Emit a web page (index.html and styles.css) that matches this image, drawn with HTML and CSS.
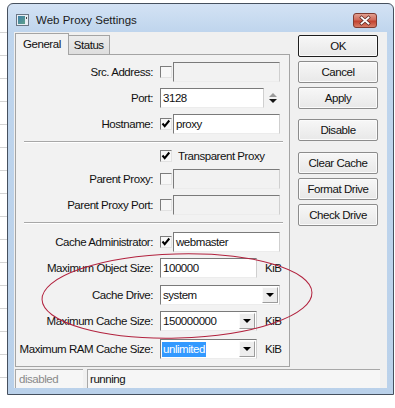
FILE: index.html
```html
<!DOCTYPE html>
<html lang="en">
<head>
    <meta charset="UTF-8">
    <title>Web Proxy Settings</title>
    <link rel="stylesheet" href="styles.css">
</head>
<body>
    <div class="window">
        <div class="titlebar">
            <svg class="app-icon" width="13" height="12" viewBox="0 0 13 12">
                <defs>
                    <linearGradient id="ig" x1="0" y1="0" x2="1" y2="1">
                        <stop offset="0" stop-color="#3d7fa8"/>
                        <stop offset="1" stop-color="#5fa08a"/>
                    </linearGradient>
                </defs>
                <rect x="0.5" y="0.5" width="12" height="11" fill="#e8eef4" stroke="#6b7786"/>
                <rect x="2" y="2" width="7" height="8" fill="url(#ig)"/>
                <rect x="10" y="3" width="1" height="2" fill="#444"/>
            </svg>
            <span class="title">Web Proxy Settings</span>
            <svg class="close-btn" width="24" height="15" viewBox="0 0 24 15">
                <defs>
                    <linearGradient id="cg" x1="0" y1="0" x2="0" y2="1">
                        <stop offset="0" stop-color="#e3a394"/>
                        <stop offset="0.45" stop-color="#cf6a5a"/>
                        <stop offset="0.55" stop-color="#c2412f"/>
                        <stop offset="1" stop-color="#d9826c"/>
                    </linearGradient>
                </defs>
                <rect x="0.5" y="0.5" width="23" height="14" rx="2.5" fill="url(#cg)" stroke="#7e3a30"/>
                <path d="M8.5 4.5 L15.5 10.5 M15.5 4.5 L8.5 10.5" stroke="#5a2a24" stroke-width="3.2" stroke-linecap="square"/>
                <path d="M8.5 4.5 L15.5 10.5 M15.5 4.5 L8.5 10.5" stroke="#fff" stroke-width="1.8" stroke-linecap="square"/>
            </svg>
        </div>

        <div class="client">
            <div class="main">
                <div class="tab-area">
                    <div class="tabs">
                        <div class="tab active">General</div>
                        <div class="tab">Status</div>
                    </div>
                    <div class="panel">
                        <div class="group first">
                            <div class="row">
                                <label>Src. Address:</label>
                                <span class="check"></span>
                                <span class="field off w107"></span>
                            </div>
                            <div class="row">
                                <label>Port:</label>
                                <span class="field w104">3128</span>
                                <span class="spin"><i class="up"></i><i class="down"></i></span>
                            </div>
                            <div class="row">
                                <label>Hostname:</label>
                                <span class="check on"><svg viewBox="0 0 10 10"><polyline points="1.5,4.5 3.7,7.2 8.3,1.5"/></svg></span>
                                <span class="field w107">proxy</span>
                            </div>
                        </div>
                        <div class="sep"></div>

                        <div class="group second">
                            <div class="row short">
                                <label></label>
                                <span class="check on"><svg viewBox="0 0 10 10"><polyline points="1.5,4.5 3.7,7.2 8.3,1.5"/></svg></span>
                                <span class="check-text">Transparent Proxy</span>
                            </div>
                            <div class="row">
                                <label>Parent Proxy:</label>
                                <span class="check"></span>
                                <span class="field off w107"></span>
                            </div>
                            <div class="row">
                                <label>Parent Proxy Port:</label>
                                <span class="check"></span>
                                <span class="field off w107"></span>
                            </div>
                        </div>
                        <div class="sep"></div>

                        <div class="group third">
                            <div class="row">
                                <label>Cache Administrator:</label>
                                <span class="check on"><svg viewBox="0 0 10 10"><polyline points="1.5,4.5 3.7,7.2 8.3,1.5"/></svg></span>
                                <span class="field w107">webmaster</span>
                            </div>
                            <div class="row">
                                <label>Maximum Object Size:</label>
                                <span class="field w97">100000</span>
                                <span class="unit">KiB</span>
                            </div>
                            <div class="row drive">
                                <label>Cache Drive:</label>
                                <span class="field select w120">system<span class="drop"><i></i></span></span>
                            </div>
                            <div class="row">
                                <label>Maximum Cache Size:</label>
                                <span class="field select w97">150000000<span class="drop"><i></i></span></span>
                                <span class="unit">KiB</span>
                            </div>
                            <div class="row ram">
                                <label>Maximum RAM Cache Size:</label>
                                <span class="field select w97"><span class="selected">unlimited</span><span class="drop"><i></i></span></span>
                                <span class="unit">KiB</span>
                            </div>
                        </div>
                    </div>
                </div>

                <div class="buttons">
                    <button class="default">OK</button>
                    <button>Cancel</button>
                    <button>Apply</button>
                    <button class="gap-a">Disable</button>
                    <button class="gap-b">Clear Cache</button>
                    <button>Format Drive</button>
                    <button>Check Drive</button>
                </div>
            </div>

            <div class="statusbar">
                <div class="cell muted">disabled</div>
                <div class="cell wide">running</div>
            </div>
        </div>
    </div>

    <svg class="annotation" width="395" height="408" viewBox="0 0 395 408">
        <ellipse cx="177" cy="296" rx="135" ry="42" transform="rotate(-1.5 177 296)"/>
    </svg>
</body>
</html>
```

FILE: styles.css
```css
* {
    box-sizing: border-box;
}
body {
    margin: 0;
    width: 395px;
    height: 408px;
    overflow: hidden;
    position: relative;
    font-family: "Liberation Sans", Arial, sans-serif;
    font-size: 11.5px;
    letter-spacing: -0.45px;
    color: #111;
    background:
        repeating-linear-gradient(to bottom, transparent 0 22px, #d4d4d4 22px 23px) 0 10px / 7px 380px no-repeat,
        #fff;
}
.window {
    margin: 3px 0 0 7px;
    width: 387px;
    height: 392px;
    border: 1px solid #46505e;
    border-radius: 6px 6px 0 0;
    background: linear-gradient(#d3e2f4, #bfd5ed 28px, #bad1ea);
    padding: 0 6px 6px;
    display: flex;
    flex-direction: column;
}
.titlebar {
    height: 28px;
    padding-top: 3px;
    display: flex;
    align-items: center;
}
.app-icon {
    margin-left: 2px;
}
.title {
    margin-left: 7px;
    font-size: 11.5px;
    letter-spacing: 0;
    color: #1b1b1b;
}
.close-btn {
    margin-left: auto;
    margin-right: 10px;
    align-self: flex-start;
    margin-top: 6px;
}
.client {
    height: 356px;
    background: #f0f0f0;
    padding-left: 1px;
    display: flex;
    flex-direction: column;
}
.main {
    display: flex;
}
.tab-area {
    width: 275px;
}
.tabs {
    height: 22px;
    display: flex;
    align-items: flex-end;
}
.tab {
    height: 19px;
    padding: 0 5px;
    line-height: 18px;
    background: linear-gradient(#ececec, #dedede);
    border: 1px solid #a4a4a4;
    border-bottom: none;
    border-left: none;
}
.tab.active {
    height: 22px;
    margin-bottom: -1px;
    padding: 0 7px 0 7px;
    line-height: 20px;
    background: #f2f2f2;
    border-left: 1px solid #a4a4a4;
    position: relative;
    z-index: 1;
}
.panel {
    height: 313px;
    background: #f2f2f2;
    border: 1px solid #a4a4a4;
}
.group.first {
    padding-top: 4px;
}
.group.second {
    padding-top: 3px;
}
.group.third {
    padding-top: 5px;
}
.sep {
    height: 2px;
    margin: 4px 6px 0 8px;
    border-top: 1px solid #a8a8a8;
    border-bottom: 1px solid #fff;
}
.row {
    height: 26px;
    display: flex;
    align-items: center;
}
.row.short {
    height: 20px;
}
.row.drive {
    margin-top: 1px;
}
.row.ram {
    margin-top: 2px;
}
.row label {
    width: 137px;
    margin-right: 7px;
    text-align: right;
    white-space: nowrap;
}
.check {
    width: 12px;
    height: 12px;
    margin-right: 1px;
    background: #f7f7f7;
    border-top: 1px solid #7c7c7c;
    border-left: 1px solid #7c7c7c;
    border-right: 1px solid #e2e2e2;
    border-bottom: 1px solid #e2e2e2;
    display: flex;
}
.check svg {
    width: 10px;
    height: 10px;
}
.check polyline {
    fill: none;
    stroke: #000;
    stroke-width: 2;
}
.check-text {
    margin-left: 5px;
}
.field {
    height: 20px;
    padding-left: 2px;
    line-height: 18px;
    background: #fff;
    border-top: 1px solid #7a7a7a;
    border-left: 1px solid #7a7a7a;
    border-right: 1px solid #cfcfcf;
    border-bottom: 1px solid #ececec;
    display: flex;
    align-items: center;
    white-space: nowrap;
}
.field.off {
    background: #f2f2f2;
}
.w97 {
    width: 97px;
}
.w104 {
    width: 104px;
}
.w107 {
    width: 107px;
}
.w120 {
    width: 120px;
}
.field.select {
    padding-right: 1px;
}
.drop {
    width: 16px;
    height: 16px;
    margin-left: auto;
    background: #ededed;
    border: 1px solid;
    border-color: #fbfbfb #9c9c9c #9c9c9c #fbfbfb;
    display: flex;
    align-items: center;
    justify-content: center;
}
.drop i {
    width: 0;
    height: 0;
    border-left: 4px solid transparent;
    border-right: 4px solid transparent;
    border-top: 4px solid #000;
}
.selected {
    margin-left: -1px;
    padding: 0 1px;
    line-height: 15px;
    background: #3399ff;
    color: #fff;
}
.spin {
    margin-left: 5px;
    display: flex;
    flex-direction: column;
    gap: 2px;
}
.spin i {
    width: 0;
    height: 0;
    border-left: 4.5px solid transparent;
    border-right: 4.5px solid transparent;
}
.spin .up {
    border-bottom: 4px solid #9a9a9a;
}
.spin .down {
    border-top: 4px solid #141414;
}
.unit {
    margin-left: 8px;
}
.buttons {
    width: 80px;
    margin-left: 8px;
    padding-top: 3px;
    display: flex;
    flex-direction: column;
    gap: 4px;
}
.buttons button {
    height: 22px;
    padding: 0;
    font-family: inherit;
    font-size: 11.5px;
    letter-spacing: -0.45px;
    color: #111;
    background: linear-gradient(#f7f7f7, #e8e8e8);
    border: 1px solid #8c8c8c;
    border-radius: 2px;
    box-shadow: inset 0 0 0 1px #fbfbfb;
}
.buttons button.default {
    border-color: #1e1e1e;
}
.buttons .gap-a {
    margin-top: 6px;
}
.buttons .gap-b {
    margin-top: 7px;
}
.statusbar {
    margin-top: 2px;
    height: 19px;
    display: flex;
}
.cell {
    height: 19px;
    padding-left: 3px;
    line-height: 18px;
    background: #f6f6f6;
    border-top: 1px solid #a8a8a8;
    border-left: 1px solid #a8a8a8;
}
.cell.muted {
    width: 68px;
    margin-right: 4px;
    color: #8a8a8a;
}
.cell.wide {
    width: 293px;
    padding-left: 2px;
}
.annotation {
    position: absolute;
    left: 0;
    top: 0;
    pointer-events: none;
}
.annotation ellipse {
    fill: none;
    stroke: #b2223e;
    stroke-width: 1;
}
```
